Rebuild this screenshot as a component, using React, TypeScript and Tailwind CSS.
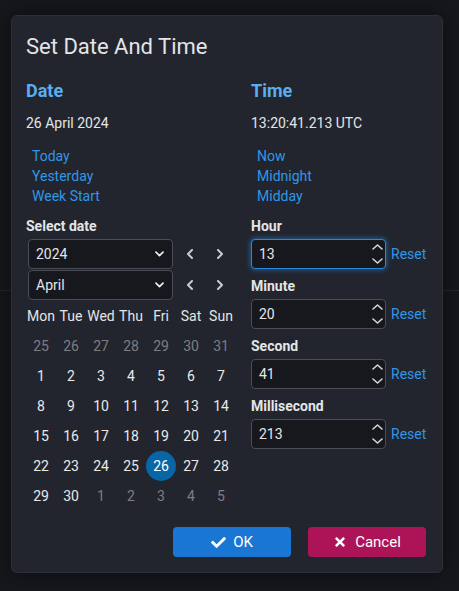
import { FaCheck, FaTimes } from 'react-icons/fa';

const weekdays = ['Mon', 'Tue', 'Wed', 'Thu', 'Fri', 'Sat', 'Sun'];

type Day = { n: number; muted?: boolean; selected?: boolean };

const days: Day[] = [
    ...[25, 26, 27, 28, 29, 30, 31].map((n) => ({ n, muted: true })),
    ...Array.from({ length: 30 }, (_, i) => ({ n: i + 1, selected: i + 1 === 26 })),
    ...[1, 2, 3, 4, 5].map((n) => ({ n, muted: true })),
];

const timeFields = [
    { label: 'Hour', value: '13', focused: true },
    { label: 'Minute', value: '20' },
    { label: 'Second', value: '41' },
    { label: 'Millisecond', value: '213' },
];

function Chevron({ dir }: { dir: 'left' | 'right' }) {
    return (
        <svg width="8" height="10" viewBox="0 0 8 10" fill="none">
            <polyline
                points={dir === 'left' ? '6,1 2,5 6,9' : '2,1 6,5 2,9'}
                stroke="#c9cbcf"
                strokeWidth="2"
                strokeLinecap="round"
                strokeLinejoin="round"
            />
        </svg>
    );
}

function SelectBox({ value }: { value: string }) {
    return (
        <div className="flex items-center justify-between w-[145px] h-[30px] ml-[2px] rounded-[4px] border border-[#4a4d55] bg-[#16181d] pl-[7px] pr-[8px] text-[14px] text-[#e4e5e7]">
            <span>{value}</span>
            <svg width="9" height="6" viewBox="0 0 9 6" fill="none">
                <polyline points="1,1.2 4.5,4.6 8,1.2" stroke="#eeeeee" strokeWidth="1.7" strokeLinecap="round" strokeLinejoin="round" />
            </svg>
        </div>
    );
}

function SelectRow({ value }: { value: string }) {
    return (
        <div className="flex flex-row items-center">
            <SelectBox value={value} />
            <div className="ml-[2px] w-[30px] h-[30px] flex items-center justify-center">
                <Chevron dir="left" />
            </div>
            <div className="w-[30px] h-[30px] flex items-center justify-center">
                <Chevron dir="right" />
            </div>
        </div>
    );
}

function Spinner() {
    return (
        <div className="flex flex-col items-center gap-[8px]">
            <svg width="11" height="6" viewBox="0 0 11 6" fill="none">
                <polyline points="1,5 5.5,1 10,5" stroke="#d4d5d8" strokeWidth="1.6" strokeLinecap="round" strokeLinejoin="round" />
            </svg>
            <svg width="11" height="6" viewBox="0 0 11 6" fill="none">
                <polyline points="1,1 5.5,5 10,1" stroke="#d4d5d8" strokeWidth="1.6" strokeLinecap="round" strokeLinejoin="round" />
            </svg>
        </div>
    );
}

export default function App() {
    return (
        <div
            className="relative w-full h-[591px] overflow-hidden bg-[#17181c]"
            style={{ fontFamily: 'Roboto, "Noto Sans", sans-serif' }}
        >
            {/* page behind the modal */}
            <div className="h-[291px] border-b border-[#26282e]" />

            <div className="absolute left-[11px] top-[15px] w-[432px] h-[558px] flex flex-col rounded-[6px] border border-[#2c2f37] bg-[#22252d] shadow-[0_0_24px_rgba(0,0,0,0.55)] pt-[16px] pl-[14px] pr-[16px] pb-[15px]">
                <h2 className="h-[30px] leading-[30px] text-[22px] text-[#e2e4e7]">Set Date And Time</h2>

                <div className="flex flex-row gap-[15px] mt-[17px]">
                    {/* date column */}
                    <div className="w-[210px] flex flex-col">
                        <h3 className="h-[24px] leading-[24px] text-[18px] font-bold text-[#5aaef0]">Date</h3>
                        <p className="mt-[10px] leading-5 text-[14px] text-[#e4e5e7]">26 April 2024</p>
                        <div className="mt-[13px] pl-[6px] flex flex-col text-[14px] leading-5 text-[#3097e8]">
                            <a>Today</a>
                            <a>Yesterday</a>
                            <a>Week Start</a>
                        </div>
                        <p className="mt-[10px] leading-5 text-[14px] font-bold text-[#e4e5e7]">Select date</p>
                        <div className="mt-[3px] flex flex-col gap-[1px]">
                            <SelectRow value="2024" />
                            <SelectRow value="April" />
                        </div>
                        <div className="mt-[1px] grid grid-cols-[repeat(7,30px)] auto-rows-[30px] text-[14px]">
                            {weekdays.map((w) => (
                                <div key={w} className="flex items-center justify-center text-[#e4e5e7]">
                                    {w}
                                </div>
                            ))}
                            {days.map((d, i) => (
                                <div key={i} className="flex items-center justify-center">
                                    <span
                                        className={
                                            d.selected
                                                ? 'w-[30px] h-[30px] rounded-full bg-[#0865a6] text-white flex items-center justify-center'
                                                : d.muted
                                                  ? 'text-[#7b7e85]'
                                                  : 'text-[#e8e9eb]'
                                        }
                                    >
                                        {d.n}
                                    </span>
                                </div>
                            ))}
                        </div>
                    </div>

                    {/* time column */}
                    <div className="flex flex-col flex-grow">
                        <h3 className="h-[24px] leading-[24px] text-[18px] font-bold text-[#5aaef0]">Time</h3>
                        <p className="mt-[10px] leading-5 text-[14px] text-[#e4e5e7]">13:20:41.213 UTC</p>
                        <div className="mt-[13px] pl-[6px] flex flex-col text-[14px] leading-5 text-[#3097e8]">
                            <a>Now</a>
                            <a>Midnight</a>
                            <a>Midday</a>
                        </div>
                        <div className="mt-[10px] flex flex-col gap-[7px]">
                            {timeFields.map((f) => (
                                <div key={f.label} className="flex flex-col">
                                    <p className="leading-5 text-[14px] font-bold text-[#e4e5e7]">{f.label}</p>
                                    <div className="mt-[3px] flex flex-row items-center gap-[5px]">
                                        <div
                                            className={
                                                f.focused
                                                    ? 'w-[135px] h-[30px] flex items-center justify-between rounded-[4px] border border-[#2f86d6] bg-[#16181d] shadow-[0_0_5px_1px_rgba(33,136,229,0.55)] pl-[7px] pr-[2px]'
                                                    : 'w-[135px] h-[30px] flex items-center justify-between rounded-[4px] border border-[#4a4d55] bg-[#16181d] pl-[7px] pr-[2px]'
                                            }
                                        >
                                            <span className="text-[14px] text-[#e4e5e7]">{f.value}</span>
                                            <Spinner />
                                        </div>
                                        <a className="text-[14px] text-[#3097e8]">Reset</a>
                                    </div>
                                </div>
                            ))}
                        </div>
                    </div>
                </div>

                <div className="mt-auto flex flex-row justify-end gap-[17px]">
                    <button className="w-[118px] h-[30px] rounded-[4px] bg-[#1976d2] text-white text-[15px] flex items-center justify-center gap-[7px]">
                        <FaCheck className="w-[15px] h-[15px]" />
                        OK
                    </button>
                    <button className="w-[118px] h-[30px] rounded-[4px] bg-[#ad1457] text-white text-[15px] flex items-center justify-center gap-[8px]">
                        <FaTimes className="w-[14px] h-[14px]" />
                        Cancel
                    </button>
                </div>
            </div>
        </div>
    );
}
